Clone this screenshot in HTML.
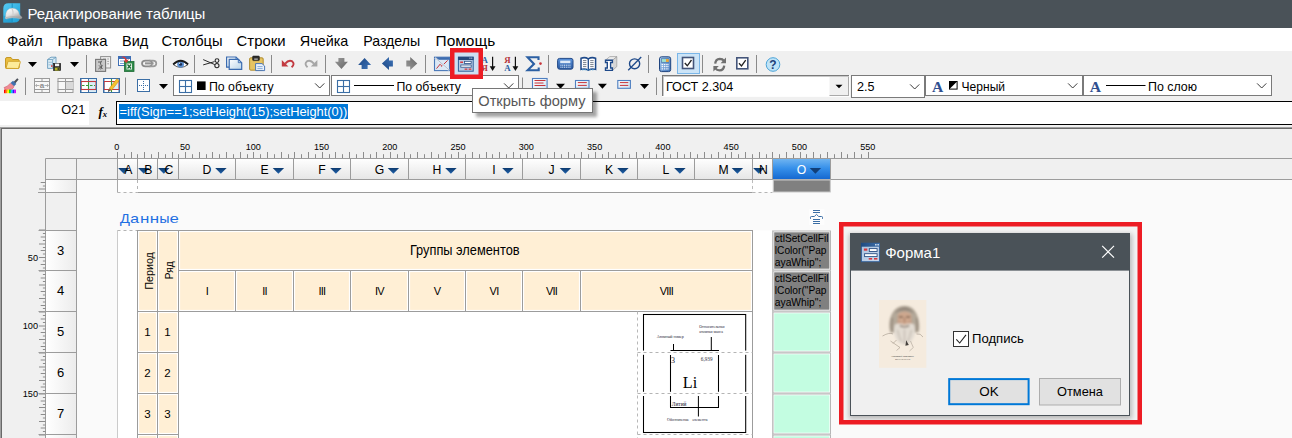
<!DOCTYPE html>
<html lang="ru"><head><meta charset="utf-8"><title>Редактирование таблицы</title>
<style>
html,body{margin:0;padding:0;}
body{width:1292px;height:438px;overflow:hidden;background:#f0f0f0;position:relative;font-family:"Liberation Sans", sans-serif;}
.blk{position:absolute;overflow:hidden;}
.blk svg{display:block;}
text{white-space:pre;}
</style></head><body>
<div id="titlebar" class="blk " style="left:0px;top:0px;width:1292px;height:28px;background:#4a5258;"><svg width="1292" height="28" viewBox="0 0 1292 28">
<linearGradient id="gapp" x1="0" y1="0" x2="1" y2="1"><stop offset="0" stop-color="#56cbf3"/><stop offset="1" stop-color="#1d9fd6"/></linearGradient><linearGradient id="ghelm" x1="0" y1="0" x2="0.6" y2="1"><stop offset="0" stop-color="#ffffff"/><stop offset="0.55" stop-color="#e4e4e4"/><stop offset="1" stop-color="#9f9f9f"/></linearGradient>
<path d="M8.5 3.3 H20.2 V16.5 Q20.2 22.5 14.2 22.5 H3.3 V8.5 Q3.3 3.3 8.5 3.3 Z" fill="url(#gapp)" />
<path d="M3.3 15.8 H12 V22.5 H3.3 Z" fill="#1b93c8" opacity="0.55"/>
<line x1="12.2" y1="3.3" x2="12.2" y2="22.5" stroke="#178cc0" stroke-width="0.9" />
<path d="M5.6 17 Q5.3 8.4 12.4 8.2 Q18.6 8.2 19.4 15 L21.8 17 Q22.4 18.6 20.2 18.7 Q12.5 16.8 6 19 Q4.6 18.2 5.6 17 Z" fill="url(#ghelm)" stroke="#b9b9b9" stroke-width="0.4" />
<path d="M11.4 8.4 Q12.8 11.5 12.4 15.6 L13.6 15.4 Q14 11.5 12.8 8.3 Z" fill="#cfcfcf" />
<path d="M6 17.6 Q12.5 15.4 20.6 17.4" fill="none" stroke="#a8a8a8" stroke-width="0.6" />
<text x="27.5" y="18.9" font-size="15" fill="#fff" font-family='"Liberation Sans", sans-serif' text-anchor="start" >Редактирование таблицы</text>
</svg></div>
<div id="menubar" class="blk " style="left:0px;top:28px;width:1292px;height:23px;background:#fff;"><svg width="1292" height="23" viewBox="0 28 1292 23">
<text x="7.2" y="45.5" font-size="14.4" fill="#000" font-family='"Liberation Sans", sans-serif' text-anchor="start" textLength="35.4" lengthAdjust="spacingAndGlyphs">Файл</text>
<text x="57.4" y="45.5" font-size="14.4" fill="#000" font-family='"Liberation Sans", sans-serif' text-anchor="start" textLength="50" lengthAdjust="spacingAndGlyphs">Правка</text>
<text x="122" y="45.5" font-size="14.4" fill="#000" font-family='"Liberation Sans", sans-serif' text-anchor="start" textLength="26.2" lengthAdjust="spacingAndGlyphs">Вид</text>
<text x="161.6" y="45.5" font-size="14.4" fill="#000" font-family='"Liberation Sans", sans-serif' text-anchor="start" textLength="61" lengthAdjust="spacingAndGlyphs">Столбцы</text>
<text x="236.6" y="45.5" font-size="14.4" fill="#000" font-family='"Liberation Sans", sans-serif' text-anchor="start" textLength="49" lengthAdjust="spacingAndGlyphs">Строки</text>
<text x="299.8" y="45.5" font-size="14.4" fill="#000" font-family='"Liberation Sans", sans-serif' text-anchor="start" textLength="48.6" lengthAdjust="spacingAndGlyphs">Ячейка</text>
<text x="363.2" y="45.5" font-size="14.4" fill="#000" font-family='"Liberation Sans", sans-serif' text-anchor="start" textLength="57" lengthAdjust="spacingAndGlyphs">Разделы</text>
<text x="435.6" y="45.5" font-size="14.4" fill="#000" font-family='"Liberation Sans", sans-serif' text-anchor="start" textLength="59.6" lengthAdjust="spacingAndGlyphs">Помощь</text>
</svg></div>
<div id="toolbar" class="blk " style="left:0px;top:51px;width:1292px;height:47px;background:#f0f0f0;"><svg width="1292" height="47" viewBox="0 51 1292 47">
<path d="M5.5 59 Q5.5 57.5 7 57.5 H11 L12.5 59.5 H18 Q19.2 59.5 19.2 60.7 V67.5 Q19.2 68.5 18 68.5 H6.7 Q5.5 68.5 5.5 67.5 Z" fill="#e9bd3f" stroke="#c2921c" stroke-width="0.9" />
<path d="M6 68.3 L7.8 62 Q8 61.3 8.8 61.3 H19.6 Q20.6 61.3 20.3 62.3 L18.6 67.8 Q18.4 68.5 17.6 68.5 Z" fill="#fdeb9a" stroke="#d0a027" stroke-width="0.9" />
<path d="M28.0 62.0 H37.0 L32.5 67.0 Z" fill="#000" />
<path d="M47.6 59.5 L51 57.2 H56 V66 L52.6 68.4 H47.6 Z" fill="#d9ecf6" stroke="#6a9cbd" stroke-width="0.9" />
<path d="M47.6 59.5 H52.6 L56 57.2 M52.6 59.5 V68.4" fill="none" stroke="#6a9cbd" stroke-width="0.8" />
<path d="M48.5 62.3 H52 M48.5 64.8 H52" fill="none" stroke="#8db5cf" stroke-width="0.8" />
<rect x="51" y="65.3" width="1.5" height="1.5" fill="#d33" />
<rect x="53.6" y="63.4" width="7" height="7.2" fill="#2b2b2b" stroke="#111" stroke-width="0.6" />
<rect x="55" y="63.6" width="4.2" height="2.6" fill="#f2f2f2" />
<rect x="54.8" y="67.6" width="4.6" height="3" fill="#b4b52a" />
<rect x="57.6" y="68" width="1.2" height="2.2" fill="#2b2b2b" />
<path d="M70.0 62.0 H79.0 L74.5 67.0 Z" fill="#000" />
<line x1="86.5" y1="55" x2="86.5" y2="73" stroke="#8a8a8a" stroke-width="1" />
<rect x="100.6" y="56.6" width="10" height="11.4" fill="#efefef" stroke="#8f8f8f" stroke-width="1" />
<path d="M103 59 H106 M107.2 59 H109 M107.2 61.4 H109 M107.2 63.8 H109" fill="none" stroke="#9d9d9d" stroke-width="0.9" />
<rect x="95.6" y="59.4" width="10" height="12" fill="#c9c9c9" stroke="#777" stroke-width="1.1" />
<path d="M98 62 H101.4 M101.8 60.6 Q99.4 63 101 65 Q102.8 66.6 100.6 69.4 M98.4 69 L102.6 65.4 M99 65.4 L102.6 69" fill="none" stroke="#5f5f5f" stroke-width="1" />
<rect x="118.5" y="56.5" width="12" height="9" fill="#fff" stroke="#3f6fb5" stroke-width="1" />
<rect x="118.5" y="56.5" width="12" height="2.5" fill="#3f6fb5" />
<line x1="120" y1="61" x2="124" y2="61" stroke="#7aa0d8" stroke-width="1" /><line x1="120" y1="63.5" x2="124" y2="63.5" stroke="#7aa0d8" stroke-width="1" />
<rect x="124.5" y="61.5" width="9.5" height="10" fill="#2f8a4a" stroke="#1d6b35" stroke-width="0.8" />
<rect x="126.5" y="63.5" width="5.5" height="6" fill="#e9f5ec" />
<path d="M127.5 64.5 L131 68.5 M131 64.5 L127.5 68.5" fill="none" stroke="#1d6b35" stroke-width="1.2" />
<path d="M121 57 Q125 55 127 60 L129 59 L126.5 63 L123.5 60.5 L125.3 60.3 Q124.5 57.5 121 57 Z" fill="#d43a3a" />
<path d="M145.5 60.7 H149.5 Q152 60.7 152 63.5 Q152 66.3 149.5 66.3 H145.5 Q142 66.3 142 63.5 Q142 60.7 145.5 60.7 Z" fill="none" stroke="#8a8a8a" stroke-width="1.7" />
<path d="M149.5 60.7 H153 Q156.3 60.7 156.3 63.5 Q156.3 66.3 153 66.3 H149.5" fill="none" stroke="#9a9a9a" stroke-width="1.7" />
<line x1="145" y1="63.5" x2="153.5" y2="63.5" stroke="#a8a8a8" stroke-width="2" />
<line x1="145" y1="63.1" x2="153.5" y2="63.1" stroke="#787878" stroke-width="0.7" />
<line x1="163.5" y1="55" x2="163.5" y2="73" stroke="#8a8a8a" stroke-width="1" />
<path d="M173.3 64.6 Q180.6 58.6 188 64.6 Q180.6 70.2 173.3 64.6 Z" fill="#fff" stroke="#333" stroke-width="0.8" />
<circle cx="180.6" cy="64.2" r="3.4" fill="#5b8fd0"/><circle cx="180.6" cy="64.2" r="1.5" fill="#1b2f55"/><circle cx="179.6" cy="63.2" r="0.7" fill="#dce9f8"/>
<path d="M173.2 64.4 Q180.6 57 188.1 64.4" fill="none" stroke="#1a1a1a" stroke-width="1.9" />
<line x1="194.5" y1="55" x2="194.5" y2="73" stroke="#8a8a8a" stroke-width="1" />
<path d="M203.2 59.6 L214.8 64.6 M203.2 64.9 L214.6 61.6" fill="none" stroke="#2a2a2a" stroke-width="1" />
<circle cx="217" cy="60.6" r="1.9" fill="none" stroke="#2a2a2a" stroke-width="1.1"/><circle cx="216.9" cy="65.6" r="2.1" fill="none" stroke="#2a2a2a" stroke-width="1.1"/>
<linearGradient id="gcopy" x1="0" y1="0" x2="1" y2="1"><stop offset="0" stop-color="#fff"/><stop offset="1" stop-color="#b9d4e8"/></linearGradient>
<path d="M226.6 57 H236 L239.4 60.4 V67.2 H226.6 Z" fill="url(#gcopy)" stroke="#3a6bb0" stroke-width="1.2" />
<path d="M236 57 V60.4 H239.4" fill="none" stroke="#3a6bb0" stroke-width="0.9" />
<path d="M229.2 59.3 H238.3 L241.7 62.7 V69.3 H229.2 Z" fill="url(#gcopy)" stroke="#3a6bb0" stroke-width="1.2" />
<path d="M238.3 59.3 V62.7 H241.7" fill="none" stroke="#3a6bb0" stroke-width="0.9" />
<rect x="249.6" y="57.8" width="13.6" height="12.4" fill="#e6c463" stroke="#a98524" stroke-width="0.9" rx="1.2"/>
<rect x="252.6" y="56" width="6.8" height="4.6" fill="#2e2e2e" stroke="#111" stroke-width="0.5" rx="0.8"/>
<rect x="254.2" y="58.6" width="3.6" height="1" fill="#ddd" />
<path d="M255.6 63.6 H262 L264.6 66 V70.6 H255.6 Z" fill="#eaf2fb" stroke="#3a6bb0" stroke-width="0.9" />
<line x1="257.4" y1="66.6" x2="262.6" y2="66.6" stroke="#7ea3d4" stroke-width="0.9" /><line x1="257.4" y1="68.6" x2="262.6" y2="68.6" stroke="#7ea3d4" stroke-width="0.9" />
<line x1="271.5" y1="55" x2="271.5" y2="73" stroke="#8a8a8a" stroke-width="1" />
<path d="M285.2 63.6 Q288.6 59.4 292 61.2 Q295.4 63.8 291.6 67.2" fill="none" stroke="#c23a40" stroke-width="1.9" />
<path d="M281.8 60 V66.4 H288.4 Z" fill="#c23a40" />
<path d="M313.95 63.6 Q310.55 59.4 307.15 61.2 Q303.75 63.8 307.55 67.2" fill="none" stroke="#a6a6a6" stroke-width="1.9" />
<path d="M317.35 60 V66.4 H310.75 Z" fill="#a6a6a6" />
<line x1="325.5" y1="55" x2="325.5" y2="73" stroke="#8a8a8a" stroke-width="1" />
<linearGradient id="garg" x1="0" y1="0" x2="1" y2="1"><stop offset="0" stop-color="#9a9a9a"/><stop offset="1" stop-color="#666"/></linearGradient><linearGradient id="garb" x1="0" y1="0" x2="1" y2="1"><stop offset="0" stop-color="#3f74b8"/><stop offset="1" stop-color="#1b4683"/></linearGradient>
<g transform="translate(341.4 63.4) rotate(0)"><path d="M-3 -5.5 L3 -5.5 L3 -1.6 L6.5 -1.6 L0 5.5 L-6.5 -1.6 L-3 -1.6 Z" fill="url(#garg)" /></g>
<g transform="translate(364.6 63.4) rotate(180)"><path d="M-3 -5.5 L3 -5.5 L3 -1.6 L6.5 -1.6 L0 5.5 L-6.5 -1.6 L-3 -1.6 Z" fill="url(#garb)" /></g>
<g transform="translate(387.4 63.4) rotate(90)"><path d="M-3 -5.5 L3 -5.5 L3 -1.6 L6.5 -1.6 L0 5.5 L-6.5 -1.6 L-3 -1.6 Z" fill="url(#garb)" /></g>
<g transform="translate(411.8 63.4) rotate(270)"><path d="M-3 -5.5 L3 -5.5 L3 -1.6 L6.5 -1.6 L0 5.5 L-6.5 -1.6 L-3 -1.6 Z" fill="url(#garg)" /></g>
<line x1="425.5" y1="55" x2="425.5" y2="73" stroke="#8a8a8a" stroke-width="1" />
<rect x="434.5" y="57.2" width="15" height="13.4" fill="#dbe8f5" stroke="#4a78b8" stroke-width="1.1" />
<rect x="434.5" y="57.2" width="15" height="2.6" fill="#3f6db0" />
<path d="M436.5 68.6 L440.6 63.6 L441.6 66.4 L447.6 60.4" fill="none" stroke="#c8343a" stroke-width="1" />
<path d="M435 58 L449 70" fill="none" stroke="#e9eef5" stroke-width="2" />
<path d="M435 57.6 L449.4 70.2" fill="none" stroke="#9fb0c4" stroke-width="0.8" />
<rect x="454" y="52" width="25" height="23" fill="#cde0f2" />
<rect x="458.4" y="57.2" width="14.8" height="14" fill="#b9cde6" stroke="#2f5f9a" stroke-width="1" />
<rect x="458" y="56.8" width="15.6" height="3.2" fill="#24497c" />
<rect x="469.4" y="57.6" width="1.1" height="1.1" fill="#c9d9ee" /><rect x="471.2" y="57.6" width="1.1" height="1.1" fill="#c9d9ee" />
<rect x="460.2" y="61.5" width="2.8" height="1.5" fill="#d6393f" />
<rect x="464.4" y="61.3" width="6.8" height="2.2" fill="#fff" stroke="#2a4f85" stroke-width="0.8" />
<rect x="460.8" y="65" width="10.4" height="2.2" fill="#fff" stroke="#2a4f85" stroke-width="0.8" />
<rect x="464.6" y="68.5" width="2.8" height="1.3" fill="#d6393f" /><rect x="468.6" y="68.5" width="2.8" height="1.3" fill="#d6393f" />
<text x="481.4" y="63.3" font-size="8.8" fill="#2b5fa3" font-family='"Liberation Serif", serif' text-anchor="start" font-weight="bold">А</text>
<text x="481.4" y="70.7" font-size="8.8" fill="#b5343a" font-family='"Liberation Serif", serif' text-anchor="start" font-weight="bold">Я</text>
<line x1="492.59999999999997" y1="56.7" x2="492.59999999999997" y2="68" stroke="#111" stroke-width="1.2" />
<path d="M489.7 66.3 H495.49999999999994 L492.59999999999997 71 Z" fill="#111" />
<text x="504.2" y="63.3" font-size="8.8" fill="#b5343a" font-family='"Liberation Serif", serif' text-anchor="start" font-weight="bold">Я</text>
<text x="504.2" y="70.7" font-size="8.8" fill="#2b5fa3" font-family='"Liberation Serif", serif' text-anchor="start" font-weight="bold">А</text>
<line x1="515.4" y1="56.7" x2="515.4" y2="68" stroke="#111" stroke-width="1.2" />
<path d="M512.5 66.3 H518.3 L515.4 71 Z" fill="#111" />
<path d="M538.5 60 V57.3 H527.6 L534 63.9 L527.6 70.3 H538.7 V67.6" fill="none" stroke="#2b5fa3" stroke-width="2.1" stroke-linejoin="miter"/>
<circle cx="540.5" cy="63.6" r="1.3" fill="#c8343a"/>
<line x1="548.5" y1="55" x2="548.5" y2="73" stroke="#8a8a8a" stroke-width="1" />
<linearGradient id="gkb" x1="0" y1="0" x2="0" y2="1"><stop offset="0" stop-color="#5a93dc"/><stop offset="1" stop-color="#2c5aa0"/></linearGradient>
<rect x="557.6" y="58.4" width="15.4" height="10.8" fill="url(#gkb)" stroke="#244a88" stroke-width="1" rx="2"/>
<rect x="560.2" y="60.6" width="10.2" height="2.6" fill="#dfeaf8" />
<path d="M560.4 65.2 H570.6 M560.4 67.2 H570.6" fill="none" stroke="#e6f0fb" stroke-width="1" stroke-dasharray="1.1 0.7"/>
<path d="M581 58.2 Q585 56.8 588.3 58.8 Q591.6 56.8 595.6 58.2 V69.4 Q591.6 68.2 588.3 70.2 Q585 68.2 581 69.4 Z" fill="#fff" stroke="#1f4a8a" stroke-width="1.5" />
<line x1="588.3" y1="58.8" x2="588.3" y2="70.2" stroke="#1f4a8a" stroke-width="1.3" />
<path d="M583 60.6 H586.4 M583 62.6 H586.4 M583 64.6 H586.4 M583 66.6 H586.4 M590.2 60.6 H593.6 M590.2 62.6 H593.6 M590.2 64.6 H593.6 M590.2 66.6 H593.6" fill="none" stroke="#55606e" stroke-width="0.8" />
<path d="M582 69.8 H594.6" fill="none" stroke="#4aa3d8" stroke-width="0.9" stroke-dasharray="1.5 1"/>
<path d="M612.5 60.2 L616.8 56.6 V66.6 L612.5 70.4" fill="#d6d6d6" stroke="#9a9a9a" stroke-width="0.7" />
<path d="M605.4 60.2 L609.8 56.6 H616.8 L612.5 60.2 Z" fill="#ececec" stroke="#9a9a9a" stroke-width="0.7" />
<path d="M605.5 60.3 H612.4 V62.5 H610.6 V68 H612.4 V70.4 H605.5 V68 H607.3 V62.5 H605.5 Z" fill="#fff" stroke="#1f4a8a" stroke-width="1.4" />
<ellipse cx="634.6" cy="63.8" rx="5.1" ry="4.9" fill="none" stroke="#1f4a8a" stroke-width="1.4"/>
<line x1="628.2" y1="70.3" x2="641.2" y2="57" stroke="#1f4a8a" stroke-width="1.3" />
<line x1="648.5" y1="55" x2="648.5" y2="73" stroke="#8a8a8a" stroke-width="1" />
<linearGradient id="gcalc" x1="0" y1="0" x2="1" y2="1"><stop offset="0" stop-color="#b4d3f3"/><stop offset="1" stop-color="#3f74bb"/></linearGradient>
<rect x="659.5" y="56.8" width="11.2" height="14.8" fill="url(#gcalc)" stroke="#1f447f" stroke-width="1" rx="2"/>
<rect x="661.3" y="58.8" width="7.6" height="3.4" fill="#9fe0d0" stroke="#2a5599" stroke-width="0.5" />
<rect x="666" y="59.1" width="2.7" height="2.8" fill="#f0a030" />
<path d="M661.6 64.6 H669 M661.6 66.7 H669 M661.6 68.8 H669" fill="none" stroke="#f4f8ff" stroke-width="1.2" stroke-dasharray="1.5 0.8"/>
<rect x="677.5" y="53.5" width="22" height="20" fill="#cce4f7" stroke="#7ab6e8" stroke-width="1" />
<rect x="682.5" y="57.5" width="11" height="11" fill="#fff" stroke="#44557a" stroke-width="1.6" />
<path d="M684.8 63 L687.3 65.8 L691.5 60" fill="none" stroke="#222" stroke-width="1.3" />
<line x1="702.5" y1="55" x2="702.5" y2="73" stroke="#8a8a8a" stroke-width="1" />
<path d="M715.2 63.6 Q715.6 59 719.8 58.8 Q722.6 58.8 724 60.8" fill="none" stroke="#707070" stroke-width="2.3" />
<path d="M726 57.6 V63.2 H720.6 Z" fill="#707070" />
<path d="M724.2 65.6 Q723.8 70.2 719.6 70.4 Q716.8 70.4 715.4 68.4" fill="none" stroke="#707070" stroke-width="2.3" />
<path d="M713.4 71.6 V66 H718.8 Z" fill="#707070" />
<rect x="736.8" y="57.8" width="11" height="11" fill="#fff" stroke="#44557a" stroke-width="1.6" />
<path d="M739 63.3 L741.5 66 L745.7 60.2" fill="none" stroke="#222" stroke-width="1.3" />
<line x1="756.5" y1="55" x2="756.5" y2="73" stroke="#8a8a8a" stroke-width="1" />
<circle cx="773" cy="64.5" r="6.8" fill="#bfe3f7" stroke="#4aa3d8" stroke-width="1"/>
<text x="773" y="69" font-size="12" fill="#1d3f7a" font-family='"Liberation Sans", sans-serif' text-anchor="middle" font-weight="bold">?</text>
<path d="M13.2 82.2 L17.3 78.3 L18.6 79.6 L15 83.8 Z" fill="#4a4f58" />
<path d="M10.5 83 L13 80.8 L16.3 84 L14 86.2 Z" fill="#3f6fae" />
<path d="M4 87.6 Q8 86.5 10.3 83.2 L14 86.4 Q12.8 90.5 6.2 91 Q5.2 89.5 4 87.6 Z" fill="#ee8a95" stroke="#c9505e" stroke-width="0.5" />
<rect x="4.0" y="89.6" width="1.75" height="3.6" fill="#f00" />
<rect x="5.7" y="89.6" width="1.75" height="3.6" fill="#f80" />
<rect x="7.4" y="89.6" width="1.75" height="3.6" fill="#ff0" />
<rect x="9.1" y="89.6" width="1.75" height="3.6" fill="#0d0" />
<rect x="10.8" y="89.6" width="1.75" height="3.6" fill="#0cf" />
<rect x="12.5" y="89.6" width="1.75" height="3.6" fill="#22f" />
<rect x="14.2" y="89.6" width="1.75" height="3.6" fill="#c0f" />
<line x1="25.5" y1="77.5" x2="25.5" y2="95" stroke="#8a8a8a" stroke-width="1" />
<rect x="34.5" y="78.5" width="15" height="14" fill="#f7f7f7" stroke="#9b9b9b" stroke-width="1" />
<line x1="34" y1="81.5" x2="50" y2="81.5" stroke="#9b9b9b" stroke-width="1" /><line x1="34" y1="89.5" x2="50" y2="89.5" stroke="#9b9b9b" stroke-width="1" />
<line x1="42" y1="78.5" x2="42" y2="81.5" stroke="#9b9b9b" stroke-width="1" /><line x1="42" y1="89.5" x2="42" y2="92.5" stroke="#9b9b9b" stroke-width="1" />
<path d="M35.5 85.5 H39.5 M44.5 85.5 H48.5 M37 84.2 L35.6 85.5 L37 86.8 M47 84.2 L48.4 85.5 L47 86.8" fill="none" stroke="#a5a5a5" stroke-width="0.9" />
<text x="42" y="88.2" font-size="8" fill="#8d8d8d" font-family='"Liberation Sans", sans-serif' text-anchor="middle" font-weight="bold">a</text>
<rect x="58.0" y="78.5" width="15" height="14" fill="#f7f7f7" stroke="#9b9b9b" stroke-width="1" />
<line x1="57.5" y1="81.5" x2="73.5" y2="81.5" stroke="#9b9b9b" stroke-width="1" /><line x1="57.5" y1="89.5" x2="73.5" y2="89.5" stroke="#9b9b9b" stroke-width="1" />
<rect x="66" y="82" width="7" height="7" fill="#d9d9d9" />
<line x1="65.5" y1="78.5" x2="65.5" y2="92.5" stroke="#9b9b9b" stroke-width="1" />
<rect x="81.0" y="78.5" width="15" height="14" fill="#fff" stroke="#3b6ea5" stroke-width="1" />
<line x1="80.5" y1="81.5" x2="96.5" y2="81.5" stroke="#3b6ea5" stroke-width="1" /><line x1="80.5" y1="89.5" x2="96.5" y2="89.5" stroke="#3b6ea5" stroke-width="1" />
<rect x="88.5" y="79" width="7.5" height="13.5" fill="#d9edf7" />
<line x1="88.5" y1="78.5" x2="88.5" y2="92.5" stroke="#3b6ea5" stroke-width="1" />
<rect x="81" y="81.5" width="15" height="8" fill="none" stroke="#c4383d" stroke-width="1.1" />
<path d="M82 85.5 H95" fill="none" stroke="#3a9a3a" stroke-width="1.1" stroke-dasharray="2.5 1.5"/>
<line x1="88.5" y1="82" x2="88.5" y2="89" stroke="#3a9a3a" stroke-width="1.1" />
<rect x="80.5" y="78.5" width="16" height="14" fill="none" stroke="#3b6ea5" stroke-width="1" />
<rect x="104.0" y="78.5" width="15" height="14" fill="#fff" stroke="#3b6ea5" stroke-width="1" />
<line x1="103.5" y1="81.5" x2="119.5" y2="81.5" stroke="#3b6ea5" stroke-width="1" /><line x1="103.5" y1="89.5" x2="119.5" y2="89.5" stroke="#3b6ea5" stroke-width="1" />
<rect x="111.5" y="82" width="7.5" height="7.5" fill="#d9edf7" />
<path d="M103.5 81.5 H119.5 M103.5 89.5 H119.5" fill="none" stroke="#c4383d" stroke-width="1.1" />
<path d="M104 81.5 V89.5 M119 81.5 V89.5" fill="none" stroke="#c4383d" stroke-width="1.1" />
<line x1="111.5" y1="78.5" x2="111.5" y2="92.5" stroke="#3a9a3a" stroke-width="1.1" />
<rect x="103.5" y="78.5" width="16" height="14" fill="none" stroke="#3b6ea5" stroke-width="1" />
<path d="M109.3 88.3 L116.8 78.8 L119.2 80.8 L111.6 90.2 Z" fill="#f6c02c" stroke="#b98518" stroke-width="0.5" />
<path d="M109.3 88.3 L111.6 90.2 L108 91.6 Z" fill="#8a6a50" />
<path d="M108.8 90 L109.9 90.9 L107.6 91.8 Z" fill="#222" />
<line x1="125.5" y1="77.5" x2="125.5" y2="95" stroke="#8a8a8a" stroke-width="1" />
<rect x="137.5" y="79.5" width="12" height="12" fill="#fff" stroke="#3b6ea5" stroke-width="1" />
<path d="M143.5 81 V91 M139 85.5 H149" fill="none" stroke="#3b6ea5" stroke-width="1" stroke-dasharray="1 1"/>
<path d="M159.0 84.0 H168.0 L163.5 89.0 Z" fill="#000" />
<rect x="173.5" y="75.5" width="156" height="20" fill="#fff" stroke="#7a7a7a" stroke-width="1" />
<rect x="179.5" y="80.5" width="12" height="12" fill="#fff" stroke="#3b6ea5" stroke-width="1.1" />
<line x1="185.5" y1="80.5" x2="185.5" y2="92.5" stroke="#3b6ea5" stroke-width="1.1" />
<line x1="179.5" y1="86.5" x2="191.5" y2="86.5" stroke="#3b6ea5" stroke-width="1.1" />
<rect x="197" y="81.4" width="8.6" height="8.6" fill="#000" />
<text x="208.9" y="90.5" font-size="12.5" fill="#000" font-family='"Liberation Sans", sans-serif' text-anchor="start" textLength="64.8" lengthAdjust="spacingAndGlyphs">По объекту</text>
<path d="M315.09999999999997 83.39999999999999 L319.7 88.0 L324.3 83.39999999999999" fill="none" stroke="#3c3c3c" stroke-width="1" />
<rect x="331.5" y="75.5" width="187" height="20" fill="#fff" stroke="#7a7a7a" stroke-width="1" />
<rect x="337.5" y="80.5" width="12" height="12" fill="#fff" stroke="#3b6ea5" stroke-width="1.1" />
<line x1="343.5" y1="80.5" x2="343.5" y2="92.5" stroke="#3b6ea5" stroke-width="1.1" />
<line x1="337.5" y1="86.5" x2="349.5" y2="86.5" stroke="#3b6ea5" stroke-width="1.1" />
<line x1="354" y1="85.5" x2="394" y2="85.5" stroke="#000" stroke-width="1" />
<text x="396.4" y="90.5" font-size="12.5" fill="#000" font-family='"Liberation Sans", sans-serif' text-anchor="start" textLength="64.4" lengthAdjust="spacingAndGlyphs">По объекту</text>
<path d="M504.09999999999997 83.39999999999999 L508.7 88.0 L513.3 83.39999999999999" fill="none" stroke="#3c3c3c" stroke-width="1" />
<line x1="522.5" y1="77.5" x2="522.5" y2="95" stroke="#8a8a8a" stroke-width="1" />
<linearGradient id="gal" x1="0" y1="0" x2="1" y2="1"><stop offset="0" stop-color="#fff"/><stop offset="1" stop-color="#cfe2f3"/></linearGradient>
<rect x="532.5" y="78.5" width="14.6" height="12" fill="url(#gal)" stroke="#4f7fc0" stroke-width="1.1" />
<line x1="534.5" y1="80.5" x2="545.5" y2="80.5" stroke="#c8343a" stroke-width="1" />
<line x1="534.5" y1="83" x2="543.5" y2="83" stroke="#c8343a" stroke-width="1" />
<line x1="534.5" y1="85.5" x2="545.5" y2="85.5" stroke="#c8343a" stroke-width="1" />
<path d="M556.0 83.8 H565.0 L560.5 88.8 Z" fill="#000" />
<rect x="575.5" y="80.5" width="13.5" height="7.800000000000001" fill="url(#gal)" stroke="#4f7fc0" stroke-width="1.1" />
<line x1="577.8" y1="82.6" x2="586.8" y2="82.6" stroke="#c8343a" stroke-width="1" />
<line x1="577.8" y1="85.4" x2="586.8" y2="85.4" stroke="#c8343a" stroke-width="1" />
<path d="M597.9 83.8 H606.9 L602.4 88.8 Z" fill="#000" />
<rect x="617.8" y="80.5" width="12.6" height="7.800000000000001" fill="url(#gal)" stroke="#4f7fc0" stroke-width="1.1" />
<line x1="619.9" y1="82.6" x2="628.3" y2="82.6" stroke="#c8343a" stroke-width="1" />
<line x1="619.9" y1="85.4" x2="628.3" y2="85.4" stroke="#c8343a" stroke-width="1" />
<path d="M640.0 83.9 H649.0 L644.5 88.9 Z" fill="#000" />
<line x1="656.5" y1="77.5" x2="656.5" y2="95" stroke="#8a8a8a" stroke-width="1" />
<rect x="662" y="75" width="188" height="22" fill="#fff" />
<line x1="662" y1="75.5" x2="850" y2="75.5" stroke="#7a7a7a" stroke-width="1" /><line x1="662.5" y1="75" x2="662.5" y2="97" stroke="#7a7a7a" stroke-width="1" />
<line x1="663" y1="76.5" x2="849" y2="76.5" stroke="#c9c9c9" stroke-width="1" /><line x1="663.5" y1="76" x2="663.5" y2="96" stroke="#c9c9c9" stroke-width="1" />
<line x1="662" y1="96.5" x2="850" y2="96.5" stroke="#fdfdfd" stroke-width="1" /><line x1="849.5" y1="75" x2="849.5" y2="97" stroke="#fdfdfd" stroke-width="1" />
<rect x="829.5" y="77" width="19" height="19" fill="#f0f0f0" />
<line x1="829.5" y1="95.5" x2="849" y2="95.5" stroke="#a9a9a9" stroke-width="1" /><line x1="848.5" y1="77" x2="848.5" y2="96" stroke="#a9a9a9" stroke-width="1" />
<path d="M835.5 84.75 H842.5 L839 88.25 Z" fill="#000" />
<text x="666" y="90.5" font-size="12.6" fill="#000" font-family='"Liberation Sans", sans-serif' text-anchor="start" >ГОСТ 2.304</text>
<rect x="851.5" y="75.5" width="73" height="22" fill="#fff" stroke="#7a7a7a" stroke-width="1" />
<text x="857" y="90.5" font-size="12.6" fill="#000" font-family='"Liberation Sans", sans-serif' text-anchor="start" >2.5</text>
<path d="M910.1 84.39999999999999 L914.7 89.0 L919.3000000000001 84.39999999999999" fill="none" stroke="#3c3c3c" stroke-width="1" />
<rect x="925.5" y="75.5" width="157" height="20" fill="#fff" stroke="#7a7a7a" stroke-width="1" />
<text x="932" y="91.8" font-size="15.6" fill="#2f4f8f" font-family='"Liberation Serif", serif' text-anchor="start" font-weight="bold">A</text>
<rect x="949.5" y="81.5" width="7.6" height="7.6" fill="#fff" stroke="#000" stroke-width="1" />
<path d="M949.5 81.5 H957.1 L949.5 89.1 Z" fill="#000" />
<text x="961.6" y="90.5" font-size="12.4" fill="#000" font-family='"Liberation Sans", sans-serif' text-anchor="start" textLength="43.4" lengthAdjust="spacingAndGlyphs">Черный</text>
<path d="M1068.1000000000001 83.39999999999999 L1072.7 88.0 L1077.3 83.39999999999999" fill="none" stroke="#3c3c3c" stroke-width="1" />
<rect x="1083.5" y="75.5" width="188" height="20" fill="#fff" stroke="#7a7a7a" stroke-width="1" />
<text x="1089.8" y="91.8" font-size="15.6" fill="#2f4f8f" font-family='"Liberation Serif", serif' text-anchor="start" font-weight="bold">A</text>
<line x1="1106" y1="85.5" x2="1145.5" y2="85.5" stroke="#000" stroke-width="1" />
<text x="1148" y="90.5" font-size="12.4" fill="#000" font-family='"Liberation Sans", sans-serif' text-anchor="start" >По слою</text>
<path d="M1257.1000000000001 83.39999999999999 L1261.7 88.0 L1266.3 83.39999999999999" fill="none" stroke="#3c3c3c" stroke-width="1" />
</svg></div>
<div id="formulabar" class="blk " style="left:0px;top:98px;width:1292px;height:28px;background:#f0f0f0;"><svg width="1292" height="28" viewBox="0 98 1292 28">
<rect x="0" y="101" width="89" height="24" fill="#fff" />
<text x="85.2" y="114.1" font-size="12.7" fill="#000" font-family='"Liberation Sans", sans-serif' text-anchor="end" >O21</text>
<text x="98.4" y="116.2" font-size="13" fill="#000" font-family='"Liberation Serif", serif' text-anchor="start" font-style="italic" font-weight="bold">f</text>
<text x="102.8" y="117.2" font-size="8.6" fill="#000" font-family='"Liberation Serif", serif' text-anchor="start" font-style="italic" font-weight="bold">x</text>
<rect x="116.5" y="101.5" width="1180" height="23" fill="#fff" stroke="#000" stroke-width="1" />
<rect x="119" y="104" width="229" height="15" fill="#0078d7" />
<text x="119.6" y="115.6" font-size="12.85" fill="#fff" font-family='"Liberation Sans", sans-serif' text-anchor="start" textLength="227.6" lengthAdjust="spacingAndGlyphs">=iff(Sign==1;setHeight(15);setHeight(0))</text>
</svg></div>
<div id="workspace" class="blk " style="left:0px;top:126px;width:1292px;height:312px;background:#f0f0f0;"><svg width="1292" height="312" viewBox="0 126 1292 312">
<defs>
<linearGradient id="gcol" x1="0" y1="0" x2="0" y2="1"><stop offset="0" stop-color="#fefefe"/><stop offset="1" stop-color="#e6e6e6"/></linearGradient>
<linearGradient id="gsel" x1="0" y1="0" x2="0" y2="1"><stop offset="0" stop-color="#6fb4f1"/><stop offset="0.45" stop-color="#3690ea"/><stop offset="1" stop-color="#1467cf"/></linearGradient>
<linearGradient id="grow" x1="0" y1="0" x2="1" y2="0"><stop offset="0" stop-color="#ffffff"/><stop offset="1" stop-color="#ececec"/></linearGradient>
<linearGradient id="gtri" x1="0" y1="0" x2="0" y2="1"><stop offset="0" stop-color="#0d3a6e"/><stop offset="1" stop-color="#1f62ad"/></linearGradient>
</defs>
<rect x="0" y="127" width="1292" height="1" fill="#a0a0a0" /><rect x="0" y="128" width="1292" height="1" fill="#696969" />
<rect x="0" y="127" width="1" height="320" fill="#a0a0a0" /><rect x="1" y="128" width="1" height="320" fill="#696969" />
<rect x="77" y="180" width="1215" height="300" fill="#fafafa" />
<line x1="117.5" y1="152" x2="117.5" y2="158.5" stroke="#8c8c8c" stroke-width="1" />
<line x1="124.5" y1="154.2" x2="124.5" y2="158.5" stroke="#8c8c8c" stroke-width="1" />
<line x1="131.5" y1="152" x2="131.5" y2="158.5" stroke="#8c8c8c" stroke-width="1" />
<line x1="137.5" y1="154.2" x2="137.5" y2="158.5" stroke="#8c8c8c" stroke-width="1" />
<line x1="144.5" y1="152" x2="144.5" y2="158.5" stroke="#8c8c8c" stroke-width="1" />
<line x1="151.5" y1="154.2" x2="151.5" y2="158.5" stroke="#8c8c8c" stroke-width="1" />
<line x1="158.5" y1="152" x2="158.5" y2="158.5" stroke="#8c8c8c" stroke-width="1" />
<line x1="165.5" y1="154.2" x2="165.5" y2="158.5" stroke="#8c8c8c" stroke-width="1" />
<line x1="172.5" y1="152" x2="172.5" y2="158.5" stroke="#8c8c8c" stroke-width="1" />
<line x1="178.5" y1="154.2" x2="178.5" y2="158.5" stroke="#8c8c8c" stroke-width="1" />
<line x1="185.5" y1="152" x2="185.5" y2="158.5" stroke="#8c8c8c" stroke-width="1" />
<line x1="192.5" y1="154.2" x2="192.5" y2="158.5" stroke="#8c8c8c" stroke-width="1" />
<line x1="199.5" y1="152" x2="199.5" y2="158.5" stroke="#8c8c8c" stroke-width="1" />
<line x1="206.5" y1="154.2" x2="206.5" y2="158.5" stroke="#8c8c8c" stroke-width="1" />
<line x1="212.5" y1="152" x2="212.5" y2="158.5" stroke="#8c8c8c" stroke-width="1" />
<line x1="219.5" y1="154.2" x2="219.5" y2="158.5" stroke="#8c8c8c" stroke-width="1" />
<line x1="226.5" y1="152" x2="226.5" y2="158.5" stroke="#8c8c8c" stroke-width="1" />
<line x1="233.5" y1="154.2" x2="233.5" y2="158.5" stroke="#8c8c8c" stroke-width="1" />
<line x1="240.5" y1="152" x2="240.5" y2="158.5" stroke="#8c8c8c" stroke-width="1" />
<line x1="247.5" y1="154.2" x2="247.5" y2="158.5" stroke="#8c8c8c" stroke-width="1" />
<line x1="253.5" y1="152" x2="253.5" y2="158.5" stroke="#8c8c8c" stroke-width="1" />
<line x1="260.5" y1="154.2" x2="260.5" y2="158.5" stroke="#8c8c8c" stroke-width="1" />
<line x1="267.5" y1="152" x2="267.5" y2="158.5" stroke="#8c8c8c" stroke-width="1" />
<line x1="274.5" y1="154.2" x2="274.5" y2="158.5" stroke="#8c8c8c" stroke-width="1" />
<line x1="281.5" y1="152" x2="281.5" y2="158.5" stroke="#8c8c8c" stroke-width="1" />
<line x1="288.5" y1="154.2" x2="288.5" y2="158.5" stroke="#8c8c8c" stroke-width="1" />
<line x1="294.5" y1="152" x2="294.5" y2="158.5" stroke="#8c8c8c" stroke-width="1" />
<line x1="301.5" y1="154.2" x2="301.5" y2="158.5" stroke="#8c8c8c" stroke-width="1" />
<line x1="308.5" y1="152" x2="308.5" y2="158.5" stroke="#8c8c8c" stroke-width="1" />
<line x1="315.5" y1="154.2" x2="315.5" y2="158.5" stroke="#8c8c8c" stroke-width="1" />
<line x1="322.5" y1="152" x2="322.5" y2="158.5" stroke="#8c8c8c" stroke-width="1" />
<line x1="329.5" y1="154.2" x2="329.5" y2="158.5" stroke="#8c8c8c" stroke-width="1" />
<line x1="335.5" y1="152" x2="335.5" y2="158.5" stroke="#8c8c8c" stroke-width="1" />
<line x1="342.5" y1="154.2" x2="342.5" y2="158.5" stroke="#8c8c8c" stroke-width="1" />
<line x1="349.5" y1="152" x2="349.5" y2="158.5" stroke="#8c8c8c" stroke-width="1" />
<line x1="356.5" y1="154.2" x2="356.5" y2="158.5" stroke="#8c8c8c" stroke-width="1" />
<line x1="363.5" y1="152" x2="363.5" y2="158.5" stroke="#8c8c8c" stroke-width="1" />
<line x1="370.5" y1="154.2" x2="370.5" y2="158.5" stroke="#8c8c8c" stroke-width="1" />
<line x1="376.5" y1="152" x2="376.5" y2="158.5" stroke="#8c8c8c" stroke-width="1" />
<line x1="383.5" y1="154.2" x2="383.5" y2="158.5" stroke="#8c8c8c" stroke-width="1" />
<line x1="390.5" y1="152" x2="390.5" y2="158.5" stroke="#8c8c8c" stroke-width="1" />
<line x1="397.5" y1="154.2" x2="397.5" y2="158.5" stroke="#8c8c8c" stroke-width="1" />
<line x1="404.5" y1="152" x2="404.5" y2="158.5" stroke="#8c8c8c" stroke-width="1" />
<line x1="410.5" y1="154.2" x2="410.5" y2="158.5" stroke="#8c8c8c" stroke-width="1" />
<line x1="417.5" y1="152" x2="417.5" y2="158.5" stroke="#8c8c8c" stroke-width="1" />
<line x1="424.5" y1="154.2" x2="424.5" y2="158.5" stroke="#8c8c8c" stroke-width="1" />
<line x1="431.5" y1="152" x2="431.5" y2="158.5" stroke="#8c8c8c" stroke-width="1" />
<line x1="438.5" y1="154.2" x2="438.5" y2="158.5" stroke="#8c8c8c" stroke-width="1" />
<line x1="445.5" y1="152" x2="445.5" y2="158.5" stroke="#8c8c8c" stroke-width="1" />
<line x1="451.5" y1="154.2" x2="451.5" y2="158.5" stroke="#8c8c8c" stroke-width="1" />
<line x1="458.5" y1="152" x2="458.5" y2="158.5" stroke="#8c8c8c" stroke-width="1" />
<line x1="465.5" y1="154.2" x2="465.5" y2="158.5" stroke="#8c8c8c" stroke-width="1" />
<line x1="472.5" y1="152" x2="472.5" y2="158.5" stroke="#8c8c8c" stroke-width="1" />
<line x1="479.5" y1="154.2" x2="479.5" y2="158.5" stroke="#8c8c8c" stroke-width="1" />
<line x1="486.5" y1="152" x2="486.5" y2="158.5" stroke="#8c8c8c" stroke-width="1" />
<line x1="492.5" y1="154.2" x2="492.5" y2="158.5" stroke="#8c8c8c" stroke-width="1" />
<line x1="499.5" y1="152" x2="499.5" y2="158.5" stroke="#8c8c8c" stroke-width="1" />
<line x1="506.5" y1="154.2" x2="506.5" y2="158.5" stroke="#8c8c8c" stroke-width="1" />
<line x1="513.5" y1="152" x2="513.5" y2="158.5" stroke="#8c8c8c" stroke-width="1" />
<line x1="520.5" y1="154.2" x2="520.5" y2="158.5" stroke="#8c8c8c" stroke-width="1" />
<line x1="527.5" y1="152" x2="527.5" y2="158.5" stroke="#8c8c8c" stroke-width="1" />
<line x1="533.5" y1="154.2" x2="533.5" y2="158.5" stroke="#8c8c8c" stroke-width="1" />
<line x1="540.5" y1="152" x2="540.5" y2="158.5" stroke="#8c8c8c" stroke-width="1" />
<line x1="547.5" y1="154.2" x2="547.5" y2="158.5" stroke="#8c8c8c" stroke-width="1" />
<line x1="554.5" y1="152" x2="554.5" y2="158.5" stroke="#8c8c8c" stroke-width="1" />
<line x1="561.5" y1="154.2" x2="561.5" y2="158.5" stroke="#8c8c8c" stroke-width="1" />
<line x1="568.5" y1="152" x2="568.5" y2="158.5" stroke="#8c8c8c" stroke-width="1" />
<line x1="574.5" y1="154.2" x2="574.5" y2="158.5" stroke="#8c8c8c" stroke-width="1" />
<line x1="581.5" y1="152" x2="581.5" y2="158.5" stroke="#8c8c8c" stroke-width="1" />
<line x1="588.5" y1="154.2" x2="588.5" y2="158.5" stroke="#8c8c8c" stroke-width="1" />
<line x1="595.5" y1="152" x2="595.5" y2="158.5" stroke="#8c8c8c" stroke-width="1" />
<line x1="602.5" y1="154.2" x2="602.5" y2="158.5" stroke="#8c8c8c" stroke-width="1" />
<line x1="608.5" y1="152" x2="608.5" y2="158.5" stroke="#8c8c8c" stroke-width="1" />
<line x1="615.5" y1="154.2" x2="615.5" y2="158.5" stroke="#8c8c8c" stroke-width="1" />
<line x1="622.5" y1="152" x2="622.5" y2="158.5" stroke="#8c8c8c" stroke-width="1" />
<line x1="629.5" y1="154.2" x2="629.5" y2="158.5" stroke="#8c8c8c" stroke-width="1" />
<line x1="636.5" y1="152" x2="636.5" y2="158.5" stroke="#8c8c8c" stroke-width="1" />
<line x1="643.5" y1="154.2" x2="643.5" y2="158.5" stroke="#8c8c8c" stroke-width="1" />
<line x1="649.5" y1="152" x2="649.5" y2="158.5" stroke="#8c8c8c" stroke-width="1" />
<line x1="656.5" y1="154.2" x2="656.5" y2="158.5" stroke="#8c8c8c" stroke-width="1" />
<line x1="663.5" y1="152" x2="663.5" y2="158.5" stroke="#8c8c8c" stroke-width="1" />
<line x1="670.5" y1="154.2" x2="670.5" y2="158.5" stroke="#8c8c8c" stroke-width="1" />
<line x1="677.5" y1="152" x2="677.5" y2="158.5" stroke="#8c8c8c" stroke-width="1" />
<line x1="684.5" y1="154.2" x2="684.5" y2="158.5" stroke="#8c8c8c" stroke-width="1" />
<line x1="690.5" y1="152" x2="690.5" y2="158.5" stroke="#8c8c8c" stroke-width="1" />
<line x1="697.5" y1="154.2" x2="697.5" y2="158.5" stroke="#8c8c8c" stroke-width="1" />
<line x1="704.5" y1="152" x2="704.5" y2="158.5" stroke="#8c8c8c" stroke-width="1" />
<line x1="711.5" y1="154.2" x2="711.5" y2="158.5" stroke="#8c8c8c" stroke-width="1" />
<line x1="718.5" y1="152" x2="718.5" y2="158.5" stroke="#8c8c8c" stroke-width="1" />
<line x1="725.5" y1="154.2" x2="725.5" y2="158.5" stroke="#8c8c8c" stroke-width="1" />
<line x1="731.5" y1="152" x2="731.5" y2="158.5" stroke="#8c8c8c" stroke-width="1" />
<line x1="738.5" y1="154.2" x2="738.5" y2="158.5" stroke="#8c8c8c" stroke-width="1" />
<line x1="745.5" y1="152" x2="745.5" y2="158.5" stroke="#8c8c8c" stroke-width="1" />
<line x1="752.5" y1="154.2" x2="752.5" y2="158.5" stroke="#8c8c8c" stroke-width="1" />
<line x1="759.5" y1="152" x2="759.5" y2="158.5" stroke="#8c8c8c" stroke-width="1" />
<line x1="766.5" y1="154.2" x2="766.5" y2="158.5" stroke="#8c8c8c" stroke-width="1" />
<line x1="772.5" y1="152" x2="772.5" y2="158.5" stroke="#8c8c8c" stroke-width="1" />
<line x1="779.5" y1="154.2" x2="779.5" y2="158.5" stroke="#8c8c8c" stroke-width="1" />
<line x1="786.5" y1="152" x2="786.5" y2="158.5" stroke="#8c8c8c" stroke-width="1" />
<line x1="793.5" y1="154.2" x2="793.5" y2="158.5" stroke="#8c8c8c" stroke-width="1" />
<line x1="800.5" y1="152" x2="800.5" y2="158.5" stroke="#8c8c8c" stroke-width="1" />
<line x1="806.5" y1="154.2" x2="806.5" y2="158.5" stroke="#8c8c8c" stroke-width="1" />
<line x1="813.5" y1="152" x2="813.5" y2="158.5" stroke="#8c8c8c" stroke-width="1" />
<line x1="820.5" y1="154.2" x2="820.5" y2="158.5" stroke="#8c8c8c" stroke-width="1" />
<line x1="827.5" y1="152" x2="827.5" y2="158.5" stroke="#8c8c8c" stroke-width="1" />
<line x1="834.5" y1="154.2" x2="834.5" y2="158.5" stroke="#8c8c8c" stroke-width="1" />
<line x1="841.5" y1="152" x2="841.5" y2="158.5" stroke="#8c8c8c" stroke-width="1" />
<line x1="847.5" y1="154.2" x2="847.5" y2="158.5" stroke="#8c8c8c" stroke-width="1" />
<line x1="854.5" y1="152" x2="854.5" y2="158.5" stroke="#8c8c8c" stroke-width="1" />
<line x1="861.5" y1="154.2" x2="861.5" y2="158.5" stroke="#8c8c8c" stroke-width="1" />
<line x1="868.5" y1="152" x2="868.5" y2="158.5" stroke="#8c8c8c" stroke-width="1" />
<text x="116.7" y="150.1" font-size="9.1" fill="#000" font-family='"Liberation Sans", sans-serif' text-anchor="middle" >0</text>
<text x="184.97500000000002" y="150.1" font-size="9.1" fill="#000" font-family='"Liberation Sans", sans-serif' text-anchor="middle" >50</text>
<text x="253.25" y="150.1" font-size="9.1" fill="#000" font-family='"Liberation Sans", sans-serif' text-anchor="middle" >100</text>
<text x="321.52500000000003" y="150.1" font-size="9.1" fill="#000" font-family='"Liberation Sans", sans-serif' text-anchor="middle" >150</text>
<text x="389.8" y="150.1" font-size="9.1" fill="#000" font-family='"Liberation Sans", sans-serif' text-anchor="middle" >200</text>
<text x="458.075" y="150.1" font-size="9.1" fill="#000" font-family='"Liberation Sans", sans-serif' text-anchor="middle" >250</text>
<text x="526.3499999999999" y="150.1" font-size="9.1" fill="#000" font-family='"Liberation Sans", sans-serif' text-anchor="middle" >300</text>
<text x="594.6249999999999" y="150.1" font-size="9.1" fill="#000" font-family='"Liberation Sans", sans-serif' text-anchor="middle" >350</text>
<text x="662.8999999999999" y="150.1" font-size="9.1" fill="#000" font-family='"Liberation Sans", sans-serif' text-anchor="middle" >400</text>
<text x="731.175" y="150.1" font-size="9.1" fill="#000" font-family='"Liberation Sans", sans-serif' text-anchor="middle" >450</text>
<text x="799.4499999999999" y="150.1" font-size="9.1" fill="#000" font-family='"Liberation Sans", sans-serif' text-anchor="middle" >500</text>
<text x="867.7249999999999" y="150.1" font-size="9.1" fill="#000" font-family='"Liberation Sans", sans-serif' text-anchor="middle" >550</text>
<rect x="45.5" y="158.5" width="1292" height="21" fill="#f0f0f0" />
<rect x="117.5" y="159" width="655" height="20.5" fill="url(#gcol)" />
<rect x="772.5" y="159" width="58" height="20.5" fill="url(#gsel)" />
<line x1="45.5" y1="158.5" x2="1292" y2="158.5" stroke="#9c9c9c" stroke-width="1" /><line x1="45.5" y1="179.5" x2="1292" y2="179.5" stroke="#9c9c9c" stroke-width="1" />
<line x1="45.5" y1="158.5" x2="45.5" y2="438" stroke="#9c9c9c" stroke-width="1" /><line x1="76.5" y1="158.5" x2="76.5" y2="438" stroke="#9c9c9c" stroke-width="1" />
<line x1="117.5" y1="158.5" x2="117.5" y2="179.5" stroke="#9c9c9c" stroke-width="1" />
<line x1="137.5" y1="158.5" x2="137.5" y2="179.5" stroke="#9c9c9c" stroke-width="1" />
<line x1="157.5" y1="158.5" x2="157.5" y2="179.5" stroke="#9c9c9c" stroke-width="1" />
<line x1="178.5" y1="158.5" x2="178.5" y2="179.5" stroke="#9c9c9c" stroke-width="1" />
<line x1="235.5" y1="158.5" x2="235.5" y2="179.5" stroke="#9c9c9c" stroke-width="1" />
<line x1="293.5" y1="158.5" x2="293.5" y2="179.5" stroke="#9c9c9c" stroke-width="1" />
<line x1="350.5" y1="158.5" x2="350.5" y2="179.5" stroke="#9c9c9c" stroke-width="1" />
<line x1="408.5" y1="158.5" x2="408.5" y2="179.5" stroke="#9c9c9c" stroke-width="1" />
<line x1="465.5" y1="158.5" x2="465.5" y2="179.5" stroke="#9c9c9c" stroke-width="1" />
<line x1="522.5" y1="158.5" x2="522.5" y2="179.5" stroke="#9c9c9c" stroke-width="1" />
<line x1="580.5" y1="158.5" x2="580.5" y2="179.5" stroke="#9c9c9c" stroke-width="1" />
<line x1="637.5" y1="158.5" x2="637.5" y2="179.5" stroke="#9c9c9c" stroke-width="1" />
<line x1="694.5" y1="158.5" x2="694.5" y2="179.5" stroke="#9c9c9c" stroke-width="1" />
<line x1="752.5" y1="158.5" x2="752.5" y2="179.5" stroke="#9c9c9c" stroke-width="1" />
<line x1="772.5" y1="158.5" x2="772.5" y2="179.5" stroke="#9c9c9c" stroke-width="1" />
<line x1="830.5" y1="158.5" x2="830.5" y2="179.5" stroke="#9c9c9c" stroke-width="1" />
<path d="M118.1 168 h11.4 l-5.7 5.8 Z" fill="url(#gtri)" />
<text x="128.3" y="174" font-size="12.2" fill="#000" font-family='"Liberation Sans", sans-serif' text-anchor="middle" >A</text>
<path d="M138.1 168 h11.4 l-5.7 5.8 Z" fill="url(#gtri)" />
<text x="148.3" y="174" font-size="12.2" fill="#000" font-family='"Liberation Sans", sans-serif' text-anchor="middle" >B</text>
<path d="M158.1 168 h11.4 l-5.7 5.8 Z" fill="url(#gtri)" />
<text x="168.8" y="174" font-size="12.2" fill="#000" font-family='"Liberation Sans", sans-serif' text-anchor="middle" >C</text>
<path d="M215.2 168 h11.4 l-5.7 5.8 Z" fill="url(#gtri)" />
<text x="207.0" y="174" font-size="12.2" fill="#000" font-family='"Liberation Sans", sans-serif' text-anchor="middle" >D</text>
<path d="M272.7 168 h11.4 l-5.7 5.8 Z" fill="url(#gtri)" />
<text x="264.5" y="174" font-size="12.2" fill="#000" font-family='"Liberation Sans", sans-serif' text-anchor="middle" >E</text>
<path d="M330.2 168 h11.4 l-5.7 5.8 Z" fill="url(#gtri)" />
<text x="322.0" y="174" font-size="12.2" fill="#000" font-family='"Liberation Sans", sans-serif' text-anchor="middle" >F</text>
<path d="M387.7 168 h11.4 l-5.7 5.8 Z" fill="url(#gtri)" />
<text x="379.5" y="174" font-size="12.2" fill="#000" font-family='"Liberation Sans", sans-serif' text-anchor="middle" >G</text>
<path d="M445.2 168 h11.4 l-5.7 5.8 Z" fill="url(#gtri)" />
<text x="437.0" y="174" font-size="12.2" fill="#000" font-family='"Liberation Sans", sans-serif' text-anchor="middle" >H</text>
<path d="M502.2 168 h11.4 l-5.7 5.8 Z" fill="url(#gtri)" />
<text x="494.0" y="174" font-size="12.2" fill="#000" font-family='"Liberation Sans", sans-serif' text-anchor="middle" >I</text>
<path d="M559.7 168 h11.4 l-5.7 5.8 Z" fill="url(#gtri)" />
<text x="551.5" y="174" font-size="12.2" fill="#000" font-family='"Liberation Sans", sans-serif' text-anchor="middle" >J</text>
<path d="M617.2 168 h11.4 l-5.7 5.8 Z" fill="url(#gtri)" />
<text x="609.0" y="174" font-size="12.2" fill="#000" font-family='"Liberation Sans", sans-serif' text-anchor="middle" >K</text>
<path d="M674.2 168 h11.4 l-5.7 5.8 Z" fill="url(#gtri)" />
<text x="666.0" y="174" font-size="12.2" fill="#000" font-family='"Liberation Sans", sans-serif' text-anchor="middle" >L</text>
<path d="M731.7 168 h11.4 l-5.7 5.8 Z" fill="url(#gtri)" />
<text x="723.5" y="174" font-size="12.2" fill="#000" font-family='"Liberation Sans", sans-serif' text-anchor="middle" >M</text>
<path d="M753.1 168 h11.4 l-5.7 5.8 Z" fill="url(#gtri)" />
<text x="763.3" y="174" font-size="12.2" fill="#000" font-family='"Liberation Sans", sans-serif' text-anchor="middle" >N</text>
<path d="M809.7 168 h11.4 l-5.7 5.8 Z" fill="#123f78" />
<text x="801.5" y="174" font-size="12.2" fill="#fff" font-family='"Liberation Sans", sans-serif' text-anchor="middle" >O</text>
<rect x="46" y="180" width="30" height="12" fill="url(#grow)" />
<line x1="38" y1="192.5" x2="76.5" y2="192.5" stroke="#9c9c9c" stroke-width="1" />
<rect x="46" y="230.8" width="30" height="210" fill="url(#grow)" />
<line x1="45.5" y1="230.5" x2="76.5" y2="230.5" stroke="#9c9c9c" stroke-width="1" />
<line x1="45.5" y1="270.5" x2="76.5" y2="270.5" stroke="#9c9c9c" stroke-width="1" />
<line x1="45.5" y1="311.5" x2="76.5" y2="311.5" stroke="#9c9c9c" stroke-width="1" />
<line x1="45.5" y1="352.5" x2="76.5" y2="352.5" stroke="#9c9c9c" stroke-width="1" />
<line x1="45.5" y1="393.5" x2="76.5" y2="393.5" stroke="#9c9c9c" stroke-width="1" />
<line x1="45.5" y1="434.5" x2="76.5" y2="434.5" stroke="#9c9c9c" stroke-width="1" />
<line x1="45.5" y1="475.5" x2="76.5" y2="475.5" stroke="#9c9c9c" stroke-width="1" />
<text x="60.5" y="254.5" font-size="13" fill="#000" font-family='"Liberation Sans", sans-serif' text-anchor="middle" >3</text>
<text x="60.5" y="295.0" font-size="13" fill="#000" font-family='"Liberation Sans", sans-serif' text-anchor="middle" >4</text>
<text x="60.5" y="336.0" font-size="13" fill="#000" font-family='"Liberation Sans", sans-serif' text-anchor="middle" >5</text>
<text x="60.5" y="377.0" font-size="13" fill="#000" font-family='"Liberation Sans", sans-serif' text-anchor="middle" >6</text>
<text x="60.5" y="418.0" font-size="13" fill="#000" font-family='"Liberation Sans", sans-serif' text-anchor="middle" >7</text>
<text x="60.5" y="459.0" font-size="13" fill="#000" font-family='"Liberation Sans", sans-serif' text-anchor="middle" >8</text>
<line x1="40.7" y1="182.5" x2="45.5" y2="182.5" stroke="#8c8c8c" stroke-width="1" />
<line x1="42.9" y1="186.0" x2="45.5" y2="186.0" stroke="#8c8c8c" stroke-width="1" />
<line x1="39.0" y1="189.0" x2="45.5" y2="189.0" stroke="#8c8c8c" stroke-width="1" />
<line x1="39.0" y1="230.0" x2="45.5" y2="230.0" stroke="#8c8c8c" stroke-width="1" />
<line x1="42.9" y1="233.5" x2="45.5" y2="233.5" stroke="#8c8c8c" stroke-width="1" />
<line x1="40.7" y1="237.0" x2="45.5" y2="237.0" stroke="#8c8c8c" stroke-width="1" />
<line x1="42.9" y1="240.5" x2="45.5" y2="240.5" stroke="#8c8c8c" stroke-width="1" />
<line x1="39.0" y1="244.0" x2="45.5" y2="244.0" stroke="#8c8c8c" stroke-width="1" />
<line x1="42.9" y1="247.5" x2="45.5" y2="247.5" stroke="#8c8c8c" stroke-width="1" />
<line x1="40.7" y1="250.5" x2="45.5" y2="250.5" stroke="#8c8c8c" stroke-width="1" />
<line x1="42.9" y1="254.0" x2="45.5" y2="254.0" stroke="#8c8c8c" stroke-width="1" />
<line x1="39.0" y1="257.5" x2="45.5" y2="257.5" stroke="#8c8c8c" stroke-width="1" />
<line x1="42.9" y1="261.0" x2="45.5" y2="261.0" stroke="#8c8c8c" stroke-width="1" />
<line x1="40.7" y1="264.5" x2="45.5" y2="264.5" stroke="#8c8c8c" stroke-width="1" />
<line x1="42.9" y1="268.0" x2="45.5" y2="268.0" stroke="#8c8c8c" stroke-width="1" />
<line x1="39.0" y1="271.0" x2="45.5" y2="271.0" stroke="#8c8c8c" stroke-width="1" />
<line x1="42.9" y1="274.5" x2="45.5" y2="274.5" stroke="#8c8c8c" stroke-width="1" />
<line x1="40.7" y1="278.0" x2="45.5" y2="278.0" stroke="#8c8c8c" stroke-width="1" />
<line x1="42.9" y1="281.5" x2="45.5" y2="281.5" stroke="#8c8c8c" stroke-width="1" />
<line x1="39.0" y1="285.0" x2="45.5" y2="285.0" stroke="#8c8c8c" stroke-width="1" />
<line x1="42.9" y1="288.0" x2="45.5" y2="288.0" stroke="#8c8c8c" stroke-width="1" />
<line x1="40.7" y1="291.5" x2="45.5" y2="291.5" stroke="#8c8c8c" stroke-width="1" />
<line x1="42.9" y1="295.0" x2="45.5" y2="295.0" stroke="#8c8c8c" stroke-width="1" />
<line x1="39.0" y1="298.5" x2="45.5" y2="298.5" stroke="#8c8c8c" stroke-width="1" />
<line x1="42.9" y1="302.0" x2="45.5" y2="302.0" stroke="#8c8c8c" stroke-width="1" />
<line x1="40.7" y1="305.5" x2="45.5" y2="305.5" stroke="#8c8c8c" stroke-width="1" />
<line x1="42.9" y1="308.5" x2="45.5" y2="308.5" stroke="#8c8c8c" stroke-width="1" />
<line x1="39.0" y1="312.0" x2="45.5" y2="312.0" stroke="#8c8c8c" stroke-width="1" />
<line x1="42.9" y1="315.5" x2="45.5" y2="315.5" stroke="#8c8c8c" stroke-width="1" />
<line x1="40.7" y1="319.0" x2="45.5" y2="319.0" stroke="#8c8c8c" stroke-width="1" />
<line x1="42.9" y1="322.5" x2="45.5" y2="322.5" stroke="#8c8c8c" stroke-width="1" />
<line x1="39.0" y1="326.0" x2="45.5" y2="326.0" stroke="#8c8c8c" stroke-width="1" />
<line x1="42.9" y1="329.0" x2="45.5" y2="329.0" stroke="#8c8c8c" stroke-width="1" />
<line x1="40.7" y1="332.5" x2="45.5" y2="332.5" stroke="#8c8c8c" stroke-width="1" />
<line x1="42.9" y1="336.0" x2="45.5" y2="336.0" stroke="#8c8c8c" stroke-width="1" />
<line x1="39.0" y1="339.5" x2="45.5" y2="339.5" stroke="#8c8c8c" stroke-width="1" />
<line x1="42.9" y1="343.0" x2="45.5" y2="343.0" stroke="#8c8c8c" stroke-width="1" />
<line x1="40.7" y1="346.5" x2="45.5" y2="346.5" stroke="#8c8c8c" stroke-width="1" />
<line x1="42.9" y1="349.5" x2="45.5" y2="349.5" stroke="#8c8c8c" stroke-width="1" />
<line x1="39.0" y1="353.0" x2="45.5" y2="353.0" stroke="#8c8c8c" stroke-width="1" />
<line x1="42.9" y1="356.5" x2="45.5" y2="356.5" stroke="#8c8c8c" stroke-width="1" />
<line x1="40.7" y1="360.0" x2="45.5" y2="360.0" stroke="#8c8c8c" stroke-width="1" />
<line x1="42.9" y1="363.5" x2="45.5" y2="363.5" stroke="#8c8c8c" stroke-width="1" />
<line x1="39.0" y1="367.0" x2="45.5" y2="367.0" stroke="#8c8c8c" stroke-width="1" />
<line x1="42.9" y1="370.0" x2="45.5" y2="370.0" stroke="#8c8c8c" stroke-width="1" />
<line x1="40.7" y1="373.5" x2="45.5" y2="373.5" stroke="#8c8c8c" stroke-width="1" />
<line x1="42.9" y1="377.0" x2="45.5" y2="377.0" stroke="#8c8c8c" stroke-width="1" />
<line x1="39.0" y1="380.5" x2="45.5" y2="380.5" stroke="#8c8c8c" stroke-width="1" />
<line x1="42.9" y1="384.0" x2="45.5" y2="384.0" stroke="#8c8c8c" stroke-width="1" />
<line x1="40.7" y1="387.0" x2="45.5" y2="387.0" stroke="#8c8c8c" stroke-width="1" />
<line x1="42.9" y1="390.5" x2="45.5" y2="390.5" stroke="#8c8c8c" stroke-width="1" />
<line x1="39.0" y1="394.0" x2="45.5" y2="394.0" stroke="#8c8c8c" stroke-width="1" />
<line x1="42.9" y1="397.5" x2="45.5" y2="397.5" stroke="#8c8c8c" stroke-width="1" />
<line x1="40.7" y1="401.0" x2="45.5" y2="401.0" stroke="#8c8c8c" stroke-width="1" />
<line x1="42.9" y1="404.5" x2="45.5" y2="404.5" stroke="#8c8c8c" stroke-width="1" />
<line x1="39.0" y1="407.5" x2="45.5" y2="407.5" stroke="#8c8c8c" stroke-width="1" />
<line x1="42.9" y1="411.0" x2="45.5" y2="411.0" stroke="#8c8c8c" stroke-width="1" />
<line x1="40.7" y1="414.5" x2="45.5" y2="414.5" stroke="#8c8c8c" stroke-width="1" />
<line x1="42.9" y1="418.0" x2="45.5" y2="418.0" stroke="#8c8c8c" stroke-width="1" />
<line x1="39.0" y1="421.5" x2="45.5" y2="421.5" stroke="#8c8c8c" stroke-width="1" />
<line x1="42.9" y1="425.0" x2="45.5" y2="425.0" stroke="#8c8c8c" stroke-width="1" />
<line x1="40.7" y1="428.0" x2="45.5" y2="428.0" stroke="#8c8c8c" stroke-width="1" />
<line x1="42.9" y1="431.5" x2="45.5" y2="431.5" stroke="#8c8c8c" stroke-width="1" />
<line x1="39.0" y1="435.0" x2="45.5" y2="435.0" stroke="#8c8c8c" stroke-width="1" />
<line x1="42.9" y1="438.5" x2="45.5" y2="438.5" stroke="#8c8c8c" stroke-width="1" />
<line x1="38.5" y1="230.5" x2="45.5" y2="230.5" stroke="#9c9c9c" stroke-width="1" />
<line x1="38.5" y1="270.5" x2="45.5" y2="270.5" stroke="#9c9c9c" stroke-width="1" />
<line x1="38.5" y1="311.5" x2="45.5" y2="311.5" stroke="#9c9c9c" stroke-width="1" />
<line x1="38.5" y1="352.5" x2="45.5" y2="352.5" stroke="#9c9c9c" stroke-width="1" />
<line x1="38.5" y1="393.5" x2="45.5" y2="393.5" stroke="#9c9c9c" stroke-width="1" />
<line x1="38.5" y1="434.5" x2="45.5" y2="434.5" stroke="#9c9c9c" stroke-width="1" />
<line x1="38.5" y1="192.5" x2="45.5" y2="192.5" stroke="#9c9c9c" stroke-width="1" />
<text x="38" y="260.7" font-size="9.2" fill="#000" font-family='"Liberation Sans", sans-serif' text-anchor="end" >50</text>
<text x="38" y="329.0" font-size="9.2" fill="#000" font-family='"Liberation Sans", sans-serif' text-anchor="end" >100</text>
<text x="38" y="397.3" font-size="9.2" fill="#000" font-family='"Liberation Sans", sans-serif' text-anchor="end" >150</text>
<rect x="117.9" y="180" width="634" height="12" fill="#fff" />
<line x1="137.5" y1="192.5" x2="752.5" y2="192.5" stroke="#9c9c9c" stroke-width="1" />
<path d="M117.5 180 V192.5" fill="none" stroke="#a8a8a8" stroke-width="1" /><path d="M117.5 230.5 V438" fill="none" stroke="#c6c6c6" stroke-width="1" />
<path d="M117.5 192.5 H137.5 M137.5 180 V192.5" fill="none" stroke="#b4b4b4" stroke-width="1" stroke-dasharray="3 3"/>
<path d="M752.5 180 V192.5 M752.5 192.5 H772.5" fill="none" stroke="#b4b4b4" stroke-width="1" stroke-dasharray="3 3"/>
<rect x="752.9" y="180" width="19.5" height="12" fill="#fff" />
<rect x="773.3" y="180" width="57" height="12" fill="#808080" stroke="#c8c8c8" stroke-width="1" />
<text x="120" y="222.9" font-size="13.5" fill="#1f6fe2" font-family='"Liberation Mono", monospace' text-anchor="start" textLength="59.2" lengthAdjust="spacingAndGlyphs">Данные</text>
<rect x="809" y="209" width="15.5" height="16" fill="#fff" stroke="none" stroke-width="1" opacity="0.6"/>
<path d="M813 210.5 H820 M813 212.5 H820 M813 219.5 H820 M813 221.5 H820 M813 223.5 H820" fill="none" stroke="#3b6ea5" stroke-width="1.1" />
<path d="M810.5 218.8 V217.3 Q810.5 216.5 811.5 216.5 H814.3 L816.5 214.4 L818.7 216.5 H821.5 Q822.5 216.5 822.5 217.3 V218.8" fill="none" stroke="#3b6ea5" stroke-width="1" />
<rect x="117.9" y="230.5" width="20" height="210" fill="#fff" />
<path d="M117.5 230.5 H137.5" fill="none" stroke="#b4b4b4" stroke-width="1" stroke-dasharray="3 3"/>
<rect x="178.5" y="311.5" width="574" height="130" fill="#fff" />
<rect x="752.9" y="230.5" width="19.5" height="210" fill="#fff" />
<line x1="772.5" y1="230.5" x2="772.5" y2="438" stroke="#d0d0d0" stroke-width="1" />
<rect x="138.0" y="231.0" width="19.0" height="80.0" fill="#fff" /><rect x="139.1" y="232.1" width="16.8" height="77.8" fill="#ffefd5" />
<rect x="158.0" y="231.0" width="20.0" height="80.0" fill="#fff" /><rect x="159.1" y="232.1" width="17.8" height="77.8" fill="#ffefd5" />
<rect x="179.0" y="231.0" width="573.0" height="39.0" fill="#fff" /><rect x="180.1" y="232.1" width="570.8" height="36.8" fill="#ffefd5" />
<rect x="179.0" y="271.0" width="56.0" height="40.0" fill="#fff" /><rect x="180.1" y="272.1" width="53.8" height="37.8" fill="#ffefd5" />
<rect x="236.0" y="271.0" width="57.0" height="40.0" fill="#fff" /><rect x="237.1" y="272.1" width="54.8" height="37.8" fill="#ffefd5" />
<rect x="294.0" y="271.0" width="56.0" height="40.0" fill="#fff" /><rect x="295.1" y="272.1" width="53.8" height="37.8" fill="#ffefd5" />
<rect x="351.0" y="271.0" width="57.0" height="40.0" fill="#fff" /><rect x="352.1" y="272.1" width="54.8" height="37.8" fill="#ffefd5" />
<rect x="409.0" y="271.0" width="56.0" height="40.0" fill="#fff" /><rect x="410.1" y="272.1" width="53.8" height="37.8" fill="#ffefd5" />
<rect x="466.0" y="271.0" width="56.0" height="40.0" fill="#fff" /><rect x="467.1" y="272.1" width="53.8" height="37.8" fill="#ffefd5" />
<rect x="523.0" y="271.0" width="57.0" height="40.0" fill="#fff" /><rect x="524.1" y="272.1" width="54.8" height="37.8" fill="#ffefd5" />
<rect x="581.0" y="271.0" width="171.0" height="40.0" fill="#fff" /><rect x="582.1" y="272.1" width="168.8" height="37.8" fill="#ffefd5" />
<rect x="138.0" y="312.0" width="19.0" height="40.0" fill="#fff" /><rect x="139.1" y="313.1" width="16.8" height="37.8" fill="#ffefd5" />
<rect x="158.0" y="312.0" width="20.0" height="40.0" fill="#fff" /><rect x="159.1" y="313.1" width="17.8" height="37.8" fill="#ffefd5" />
<rect x="138.0" y="353.0" width="19.0" height="40.0" fill="#fff" /><rect x="139.1" y="354.1" width="16.8" height="37.8" fill="#ffefd5" />
<rect x="158.0" y="353.0" width="20.0" height="40.0" fill="#fff" /><rect x="159.1" y="354.1" width="17.8" height="37.8" fill="#ffefd5" />
<rect x="138.0" y="394.0" width="19.0" height="40.0" fill="#fff" /><rect x="139.1" y="395.1" width="16.8" height="37.8" fill="#ffefd5" />
<rect x="158.0" y="394.0" width="20.0" height="40.0" fill="#fff" /><rect x="159.1" y="395.1" width="17.8" height="37.8" fill="#ffefd5" />
<rect x="138.0" y="435.0" width="19.0" height="40.0" fill="#fff" /><rect x="139.1" y="436.1" width="16.8" height="37.8" fill="#ffefd5" />
<rect x="158.0" y="435.0" width="20.0" height="40.0" fill="#fff" /><rect x="159.1" y="436.1" width="17.8" height="37.8" fill="#ffefd5" />
<rect x="137.5" y="230.5" width="20.0" height="81.0" fill="none" stroke="#9c9c9c" stroke-width="1" />
<rect x="157.5" y="230.5" width="21.0" height="81.0" fill="none" stroke="#9c9c9c" stroke-width="1" />
<rect x="178.5" y="230.5" width="574.0" height="40.0" fill="none" stroke="#9c9c9c" stroke-width="1" />
<rect x="178.5" y="270.5" width="57.0" height="41.0" fill="none" stroke="#9c9c9c" stroke-width="1" />
<rect x="235.5" y="270.5" width="58.0" height="41.0" fill="none" stroke="#9c9c9c" stroke-width="1" />
<rect x="293.5" y="270.5" width="57.0" height="41.0" fill="none" stroke="#9c9c9c" stroke-width="1" />
<rect x="350.5" y="270.5" width="58.0" height="41.0" fill="none" stroke="#9c9c9c" stroke-width="1" />
<rect x="408.5" y="270.5" width="57.0" height="41.0" fill="none" stroke="#9c9c9c" stroke-width="1" />
<rect x="465.5" y="270.5" width="57.0" height="41.0" fill="none" stroke="#9c9c9c" stroke-width="1" />
<rect x="522.5" y="270.5" width="58.0" height="41.0" fill="none" stroke="#9c9c9c" stroke-width="1" />
<rect x="580.5" y="270.5" width="172.0" height="41.0" fill="none" stroke="#9c9c9c" stroke-width="1" />
<rect x="137.5" y="311.5" width="20.0" height="41.0" fill="none" stroke="#9c9c9c" stroke-width="1" />
<rect x="157.5" y="311.5" width="21.0" height="41.0" fill="none" stroke="#9c9c9c" stroke-width="1" />
<rect x="137.5" y="352.5" width="20.0" height="41.0" fill="none" stroke="#9c9c9c" stroke-width="1" />
<rect x="157.5" y="352.5" width="21.0" height="41.0" fill="none" stroke="#9c9c9c" stroke-width="1" />
<rect x="137.5" y="393.5" width="20.0" height="41.0" fill="none" stroke="#9c9c9c" stroke-width="1" />
<rect x="157.5" y="393.5" width="21.0" height="41.0" fill="none" stroke="#9c9c9c" stroke-width="1" />
<rect x="137.5" y="434.5" width="20.0" height="41.0" fill="none" stroke="#9c9c9c" stroke-width="1" />
<rect x="157.5" y="434.5" width="21.0" height="41.0" fill="none" stroke="#9c9c9c" stroke-width="1" />
<line x1="752.5" y1="230.5" x2="752.5" y2="438" stroke="#9c9c9c" stroke-width="1" />
<text transform="translate(152.6 289.6) rotate(-90)" font-size="11.6" font-family='"Liberation Sans", sans-serif' textLength="37.4" lengthAdjust="spacingAndGlyphs" fill="#000">Период</text>
<text transform="translate(173 279.2) rotate(-90)" font-size="11.6" font-family='"Liberation Sans", sans-serif' textLength="17.8" lengthAdjust="spacingAndGlyphs" fill="#000">Ряд</text>
<text x="409.9" y="254.9" font-size="13.8" fill="#000" font-family='"Liberation Sans", sans-serif' text-anchor="start" textLength="109.7" lengthAdjust="spacingAndGlyphs">Группы элементов</text>
<text x="207.0" y="295" font-size="11" fill="#000" font-family='"Liberation Sans", sans-serif' text-anchor="middle" letter-spacing="-0.8">I</text>
<text x="264.5" y="295" font-size="11" fill="#000" font-family='"Liberation Sans", sans-serif' text-anchor="middle" letter-spacing="-0.8">II</text>
<text x="322.0" y="295" font-size="11" fill="#000" font-family='"Liberation Sans", sans-serif' text-anchor="middle" letter-spacing="-0.8">III</text>
<text x="379.5" y="295" font-size="11" fill="#000" font-family='"Liberation Sans", sans-serif' text-anchor="middle" letter-spacing="-0.8">IV</text>
<text x="437.0" y="295" font-size="11" fill="#000" font-family='"Liberation Sans", sans-serif' text-anchor="middle" letter-spacing="-0.8">V</text>
<text x="494.0" y="295" font-size="11" fill="#000" font-family='"Liberation Sans", sans-serif' text-anchor="middle" letter-spacing="-0.8">VI</text>
<text x="551.5" y="295" font-size="11" fill="#000" font-family='"Liberation Sans", sans-serif' text-anchor="middle" letter-spacing="-0.8">VII</text>
<text x="666.3" y="295" font-size="11" fill="#000" font-family='"Liberation Sans", sans-serif' text-anchor="middle" letter-spacing="-0.8">VIII</text>
<text x="147.4" y="335.7" font-size="11.5" fill="#000" font-family='"Liberation Sans", sans-serif' text-anchor="middle" >1</text>
<text x="167.4" y="335.7" font-size="11.5" fill="#000" font-family='"Liberation Sans", sans-serif' text-anchor="middle" >1</text>
<text x="147.4" y="376.7" font-size="11.5" fill="#000" font-family='"Liberation Sans", sans-serif' text-anchor="middle" >2</text>
<text x="167.4" y="376.7" font-size="11.5" fill="#000" font-family='"Liberation Sans", sans-serif' text-anchor="middle" >2</text>
<text x="147.4" y="417.7" font-size="11.5" fill="#000" font-family='"Liberation Sans", sans-serif' text-anchor="middle" >3</text>
<text x="167.4" y="417.7" font-size="11.5" fill="#000" font-family='"Liberation Sans", sans-serif' text-anchor="middle" >3</text>
<rect x="773" y="231.0" width="57.5" height="39.0" fill="#fff" stroke="#b6b6b6" stroke-width="1" />
<rect x="774.2" y="232.3" width="55.2" height="36.4" fill="#808080" />
<text x="774.8" y="241.9" font-size="11.4" fill="#000" font-family='"Liberation Sans", sans-serif' text-anchor="start" textLength="53.6" lengthAdjust="spacingAndGlyphs">ctlSetCellFil</text>
<text x="774.8" y="253.9" font-size="11.4" fill="#000" font-family='"Liberation Sans", sans-serif' text-anchor="start" textLength="51.7" lengthAdjust="spacingAndGlyphs">lColor("Pap</text>
<text x="774.8" y="265.9" font-size="11.4" fill="#000" font-family='"Liberation Sans", sans-serif' text-anchor="start" textLength="46.5" lengthAdjust="spacingAndGlyphs">ayaWhip";</text>
<rect x="773" y="271.0" width="57.5" height="40.0" fill="#fff" stroke="#b6b6b6" stroke-width="1" />
<rect x="774.2" y="272.3" width="55.2" height="37.4" fill="#808080" />
<text x="774.8" y="281.9" font-size="11.4" fill="#000" font-family='"Liberation Sans", sans-serif' text-anchor="start" textLength="53.6" lengthAdjust="spacingAndGlyphs">ctlSetCellFil</text>
<text x="774.8" y="293.9" font-size="11.4" fill="#000" font-family='"Liberation Sans", sans-serif' text-anchor="start" textLength="51.7" lengthAdjust="spacingAndGlyphs">lColor("Pap</text>
<text x="774.8" y="305.9" font-size="11.4" fill="#000" font-family='"Liberation Sans", sans-serif' text-anchor="start" textLength="46.5" lengthAdjust="spacingAndGlyphs">ayaWhip";</text>
<rect x="773" y="312.0" width="57.5" height="40.0" fill="#fff" stroke="#b6b6b6" stroke-width="1" />
<rect x="774.2" y="313.3" width="55.2" height="37.4" fill="#c3fde1" />
<rect x="773" y="353.0" width="57.5" height="40.0" fill="#fff" stroke="#b6b6b6" stroke-width="1" />
<rect x="774.2" y="354.3" width="55.2" height="37.4" fill="#c3fde1" />
<rect x="773" y="394.0" width="57.5" height="40.0" fill="#fff" stroke="#b6b6b6" stroke-width="1" />
<rect x="774.2" y="395.3" width="55.2" height="37.4" fill="#c3fde1" />
<rect x="773" y="435.0" width="57.5" height="40.0" fill="#fff" stroke="#b6b6b6" stroke-width="1" />
<rect x="774.2" y="436.3" width="55.2" height="37.4" fill="#c3fde1" />
<path d="M637.5 311.5 V438" fill="none" stroke="#b8b8b8" stroke-width="1" stroke-dasharray="3 3"/>
<rect x="643.5" y="314.5" width="102.2" height="118" fill="none" stroke="#000" stroke-width="1.05" />
<rect x="640" y="350.6" width="110" height="4.2" fill="#fff" /><rect x="640" y="391.8" width="110" height="4.2" fill="#fff" />
<path d="M670.5 350.4 H719 M670.5 355 V407.4 H718.5 V355" fill="none" stroke="#000" stroke-width="1.05" />
<rect x="660" y="391.8" width="70" height="4.2" fill="#fff" />
<path d="M673.5 344 V350.3 M711.3 337 V350.3 M698.4 396 V416.5" fill="none" stroke="#000" stroke-width="1" />
<path d="M637.5 352.5 H752.5 M637.5 393.5 H752.5 M637.5 434.5 H752.5" fill="none" stroke="#b4b4b4" stroke-width="1" stroke-dasharray="3 3"/>
<text x="690" y="387.6" font-size="16.2" fill="#000" font-family='"Liberation Serif", serif' text-anchor="middle" >Li</text>
<text x="671" y="362.8" font-size="8" fill="#223" font-family='"Liberation Serif", serif' text-anchor="start" >3</text>
<text x="700.8" y="360.5" font-size="5.2" fill="#334" font-family='"Liberation Serif", serif' text-anchor="start" >6,939</text>
<text x="671.8" y="405.8" font-size="5.4" fill="#223" font-family='"Liberation Serif", serif' text-anchor="start" >Литий</text>
<text x="699.3" y="328.3" font-size="3.9" fill="#223" font-family='"Liberation Serif", serif' text-anchor="start" >Относительная</text>
<text x="699.3" y="333" font-size="3.9" fill="#223" font-family='"Liberation Serif", serif' text-anchor="start" >атомная масса</text>
<text x="656.7" y="338" font-size="4" fill="#223" font-family='"Liberation Serif", serif' text-anchor="start" >Атомный номер</text>
<text x="667" y="421.3" font-size="4" fill="#223" font-family='"Liberation Serif", serif' text-anchor="start" >Обозначение   элемента</text>
</svg></div>
<div id="dialog" class="blk " style="left:836px;top:219px;width:310px;height:209px;"><svg width="310" height="209" viewBox="836 219 310 209">
<defs><linearGradient id="gsh" x1="0" y1="0" x2="0" y2="1"><stop offset="0" stop-color="#f4f4f4"/><stop offset="1" stop-color="#d8d8d8"/></linearGradient>
<filter id="blur" x="-10%" y="-10%" width="120%" height="120%"><feGaussianBlur stdDeviation="2.5"/></filter></defs>
<rect x="841" y="224" width="299" height="198.5" fill="#f3f3f3" />
<rect x="849" y="234" width="283" height="185" fill="#000" stroke="none" stroke-width="1" opacity="0.24" filter="url(#blur)"/>
<rect x="841.25" y="224.25" width="298.5" height="198" fill="none" stroke="#ed1c24" stroke-width="4.5" />
<rect x="850.5" y="233.5" width="279" height="182" fill="#f0f0f0" stroke="#4a5258" stroke-width="1" />
<rect x="850" y="233" width="280" height="37.6" fill="#4a5258" />
<linearGradient id="gfi" x1="0" y1="0" x2="1" y2="1"><stop offset="0" stop-color="#a9c1de"/><stop offset="1" stop-color="#cbdaee"/></linearGradient><linearGradient id="gfb" x1="0" y1="0" x2="1" y2="0"><stop offset="0" stop-color="#1f4a80"/><stop offset="1" stop-color="#3d6ea8"/></linearGradient>
<rect x="861.4" y="243.3" width="18" height="18.4" fill="url(#gfi)" stroke="#2f5f9a" stroke-width="0.9" />
<rect x="861" y="242.9" width="18.8" height="3.8" fill="url(#gfb)" />
<rect x="875" y="244" width="1.6" height="1.5" fill="#c9d9ee" /><rect x="877.4" y="244" width="1.6" height="1.5" fill="#c9d9ee" />
<rect x="863.9" y="248.5" width="3.4" height="2.2" fill="#d6393f" />
<rect x="869.3" y="248.6" width="7.8" height="2.9" fill="#fff" stroke="#2a4f85" stroke-width="0.9" />
<rect x="864.6" y="253.7" width="12.5" height="2.9" fill="#fff" stroke="#2a4f85" stroke-width="0.9" />
<rect x="868.7" y="258" width="3.4" height="1.6" fill="#d6393f" /><rect x="874" y="258" width="3.4" height="1.6" fill="#d6393f" />
<text x="885.2" y="257.8" font-size="15" fill="#fff" font-family='"Liberation Sans", sans-serif' text-anchor="start" >Форма1</text>
<path d="M1102.2 245.9 L1114 257.7 M1114 245.9 L1102.2 257.7" fill="none" stroke="#fff" stroke-width="1.2" />
<filter id="pb" x="-20%" y="-20%" width="140%" height="140%"><feGaussianBlur stdDeviation="0.9"/></filter><filter id="pb2" x="-20%" y="-20%" width="140%" height="140%"><feGaussianBlur stdDeviation="0.5"/></filter>
<rect x="879" y="300" width="47.3" height="67.8" fill="#f5ebde" />
<g filter="url(#pb)">
<path d="M890 332 Q887.5 322 892 313.5 Q896 306 904.5 305.8 Q913 306 916.5 313.5 Q920.5 322 919 331.5 Q915.5 335 912 329.5 L897 329.5 Q893.5 335 890 332 Z" fill="#b3a899" />
<path d="M894.5 313.5 Q899 307 905 307.3 Q910.5 307.6 914 313.5 Q908.5 310 904.5 310.6 Q899 310.4 894.5 313.5 Z" fill="#93867a" />
<path d="M892.5 318 Q891 325 892.5 331 M916.5 318 Q918 325 916.5 331" fill="none" stroke="#8d8174" stroke-width="1.2" />
<path d="M897.8 314.2 Q904.5 308.8 911.2 314.2 L911.6 324 Q904.5 330.5 897.4 324 Z" fill="#cda78e" />
<path d="M898.8 317 H903 M906 317 H910.2" fill="none" stroke="#5a4334" stroke-width="1.2" />
<path d="M904.5 317.5 V322.4" fill="none" stroke="#a57860" stroke-width="1.1" />
<path d="M898 320.5 Q899.5 323 901 323.4 M911 320.5 Q909.5 323 908 323.4" fill="none" stroke="#b58a72" stroke-width="0.8" />
<path d="M894.8 324.6 Q899 322.4 904.5 324.9 Q910 322.4 914.2 324.6 Q917 334 911 342 Q904.5 347 898 342 Q892 334 894.8 324.6 Z" fill="#e2dbd2" />
<path d="M899.8 325.6 Q904.5 328 909.2 325.6" fill="none" stroke="#85766a" stroke-width="1.2" />
<path d="M897.5 330 Q899 337 901.5 341.5 M911.5 330 Q910 337 907.5 341.5 M904.5 329.5 V344" fill="none" stroke="#b4aa9f" stroke-width="0.8" />
</g>
<g filter="url(#pb2)">
<path d="M882.5 336 Q889.5 332 893 334 M916.5 334 Q920.5 333 923 337 M890.5 341 L900 347.5 L896.5 350.5 M896.5 340 L893 343.5" fill="none" stroke="#9a9083" stroke-width="0.55" />
<path d="M906.2 340.2 L908.8 345 L905.4 345.8 Z" fill="#45403c" />
<path d="M910.5 341 L913.3 347.5 L909.5 351" fill="none" stroke="#a39a8e" stroke-width="0.55" />
</g>
<text x="902.7" y="357.4" font-size="2.7" fill="#3c3c3c" font-family='"Liberation Serif", serif' text-anchor="middle" font-style="italic">Дмитрий Иванович</text>
<text x="902.7" y="360.3" font-size="2.5" fill="#3c3c3c" font-family='"Liberation Serif", serif' text-anchor="middle" >МЕНДЕЛЕЕВ</text>
<rect x="953.5" y="331.5" width="15" height="15" fill="#fff" stroke="#333" stroke-width="1" />
<path d="M956.3 339.3 L959.7 343 L966 334.8" fill="none" stroke="#222" stroke-width="1.1" />
<text x="972" y="342.8" font-size="13.1" fill="#000" font-family='"Liberation Sans", sans-serif' text-anchor="start" >Подпись</text>
<rect x="949.2" y="379.1" width="79.4" height="25.1" fill="#e1e1e1" stroke="#0078d7" stroke-width="2" />
<text x="989" y="396.2" font-size="13.4" fill="#000" font-family='"Liberation Sans", sans-serif' text-anchor="middle" >OK</text>
<rect x="1039.5" y="378.5" width="81" height="26.5" fill="#e1e1e1" stroke="#adadad" stroke-width="1" />
<text x="1080" y="396.2" font-size="12.8" fill="#000" font-family='"Liberation Sans", sans-serif' text-anchor="middle" >Отмена</text>
</svg></div>
<div id="highlight" class="blk " style="left:449px;top:47px;width:36px;height:34px;"><svg width="36" height="34" viewBox="449 47 36 34">
<rect x="452.25" y="50.25" width="28.5" height="26.5" fill="none" stroke="#ed1c24" stroke-width="4.5" />
</svg></div>
<div id="tooltip" class="blk" style="overflow:visible;box-shadow:4px 4px 3px rgba(0,0,0,0.36);left:472px;top:88px;width:121px;height:25px;"><svg width="121" height="25" viewBox="472 88 121 25">
<rect x="472.5" y="88.5" width="120" height="24" fill="#fff" stroke="#767676" stroke-width="1" />
<text x="478.3" y="105.7" font-size="15" fill="#575757" font-family='"Liberation Sans", sans-serif' text-anchor="start" textLength="107.2" lengthAdjust="spacingAndGlyphs">Открыть форму</text>
</svg></div>

</body></html>
